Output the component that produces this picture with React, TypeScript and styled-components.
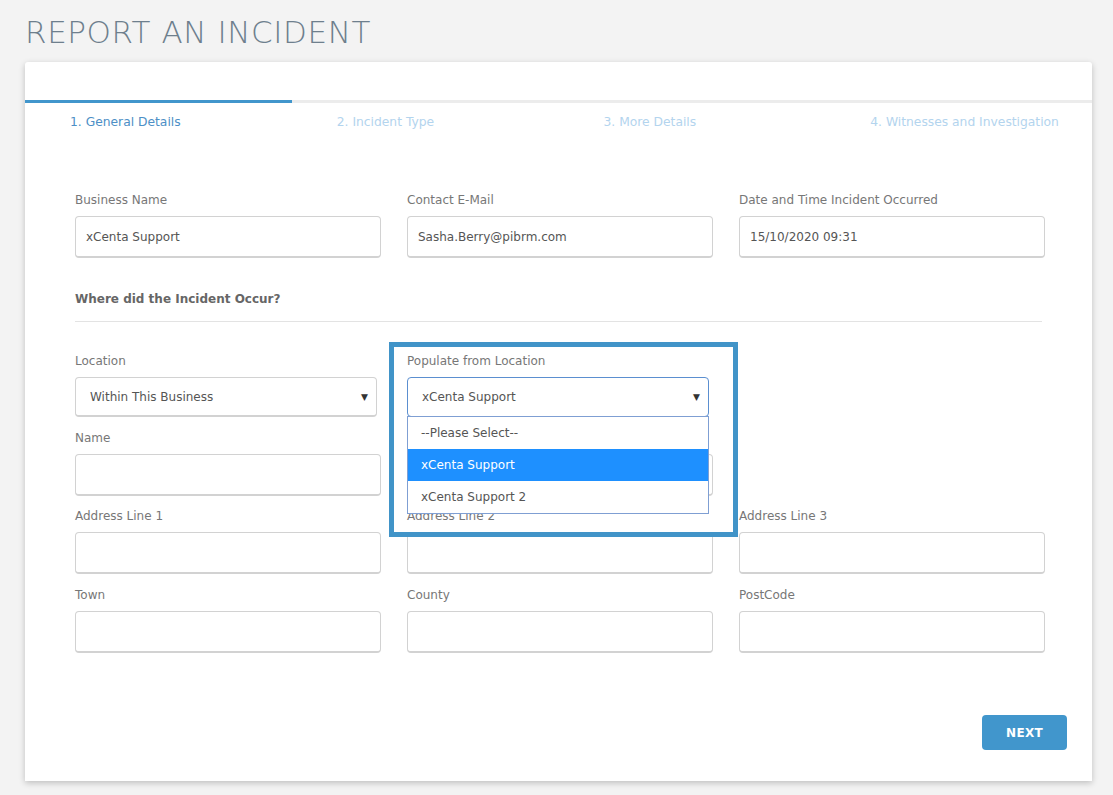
import React from "react";
import styled, { createGlobalStyle } from "styled-components";

const font = `"DejaVu Sans", "Open Sans", Arial, sans-serif`;

const GlobalStyle = createGlobalStyle`
  html, body {
    margin: 0;
    padding: 0;
    background: #f3f3f3;
    font-family: ${font};
  }
`;

const Page = styled.div`
  padding: 14px 21px 14px 25px;
`;

const Title = styled.h1`
  margin: 0 0 12px 0;
  font-size: 31px;
  font-weight: 300;
  letter-spacing: 0.6px;
  color: #6e7f8d;
  line-height: 36px;
`;

const Card = styled.div`
  background: #fff;
  border-radius: 3px 3px 0 0;
  box-shadow: 0 2px 6px rgba(0, 0, 0, 0.22);
  padding-top: 38px;
  padding-bottom: 31px;
`;

const Tabs = styled.div`
  display: flex;
`;

const Tab = styled.div<{ $active?: boolean }>`
  flex: 1;
  border-top: 3px solid ${(p) => (p.$active ? "#4196cc" : "#ececec")};
  padding: 11px 0 0 45px;
  font-size: 12.3px;
  line-height: 16px;
  color: ${(p) => (p.$active ? "#4d8fc6" : "#b3d4ee")};
  white-space: nowrap;
`;

const Body = styled.div`
  padding: 62px 47px 0 50px;
`;

const Row = styled.div<{ $gap?: number }>`
  display: grid;
  grid-template-columns: repeat(3, 306px);
  column-gap: 26px;
  margin-bottom: ${(p) => p.$gap ?? 13}px;
`;

const Field = styled.div`
  position: relative;
`;

const Label = styled.div`
  font-size: 12px;
  line-height: 16px;
  color: #777;
  margin-bottom: 8px;
  white-space: nowrap;
  min-height: 16px;
`;

const Input = styled.div`
  box-sizing: border-box;
  height: 42px;
  border: 1px solid #d2d2d2;
  border-bottom-width: 2px;
  border-radius: 4px;
  padding: 0 10px;
  display: flex;
  align-items: center;
  font-size: 12px;
  color: #555;
`;

const Select = styled.div<{ $focus?: boolean }>`
  box-sizing: border-box;
  width: 302px;
  height: 40px;
  border: 1px solid ${(p) => (p.$focus ? "#5b8fd0" : "#d2d2d2")};
  border-bottom-width: ${(p) => (p.$focus ? "1px" : "2px")};
  border-radius: 4px;
  padding: 0 8px 0 14px;
  display: flex;
  align-items: center;
  justify-content: space-between;
  font-size: 12px;
  color: #555;
`;

const Caret = styled.span`
  font-size: 9px;
  color: #333;
`;

const Section = styled.div`
  font-size: 12px;
  font-weight: bold;
  color: #666;
  line-height: 16px;
  margin-top: 33px;
  padding-bottom: 14px;
  border-bottom: 1px solid #e3e3e3;
  margin-bottom: 31px;
  margin-right: 3px;
`;

const Highlight = styled.div`
  position: absolute;
  left: -18px;
  top: -11px;
  width: 349px;
  height: 195px;
  box-sizing: border-box;
  border: 5px solid #4194c8;
  pointer-events: none;
  z-index: 3;
`;

const Options = styled.div`
  position: absolute;
  left: 0;
  top: 63px;
  width: 302px;
  box-sizing: border-box;
  border: 1px solid #7f9fd3;
  background: #fff;
  z-index: 2;
`;

const Option = styled.div<{ $selected?: boolean }>`
  height: 32px;
  display: flex;
  align-items: center;
  padding-left: 13px;
  font-size: 12px;
  color: ${(p) => (p.$selected ? "#fff" : "#555")};
  background: ${(p) => (p.$selected ? "#1e90ff" : "#fff")};
`;

const Footer = styled.div`
  display: flex;
  justify-content: flex-end;
  padding: 49px 25px 0 0;
`;

const Button = styled.button`
  width: 85px;
  height: 35px;
  border: none;
  border-radius: 4px;
  background: #4196cc;
  color: #fff;
  font-family: ${font};
  font-size: 12px;
  font-weight: bold;
  letter-spacing: 0.3px;
`;

const steps = ["1. General Details", "2. Incident Type", "3. More Details", "4. Witnesses and Investigation"];

const TextField = ({ label, value = "" }: { label: string; value?: string }) => (
  <Field>
    <Label>{label}</Label>
    <Input>{value}</Input>
  </Field>
);

export default function App() {
  return (
    <>
      <GlobalStyle />
      <Page>
        <Title>REPORT AN INCIDENT</Title>
        <Card>
          <Tabs>
            {steps.map((s, i) => (
              <Tab key={s} $active={i === 0}>
                {s}
              </Tab>
            ))}
          </Tabs>
          <Body>
            <Row>
              <TextField label="Business Name" value="xCenta Support" />
              <TextField label="Contact E-Mail" value="Sasha.Berry@pibrm.com" />
              <TextField label="Date and Time Incident Occurred" value="15/10/2020 09:31" />
            </Row>
            <Section>Where did the Incident Occur?</Section>
            <Row>
              <Field>
                <Label>Location</Label>
                <Select>
                  Within This Business
                  <Caret>▼</Caret>
                </Select>
              </Field>
              <Field>
                <Label>Populate from Location</Label>
                <Select $focus>
                  xCenta Support
                  <Caret>▼</Caret>
                </Select>
                <Options>
                  <Option>--Please Select--</Option>
                  <Option $selected>xCenta Support</Option>
                  <Option>xCenta Support 2</Option>
                </Options>
                <Highlight />
              </Field>
            </Row>
            <Row $gap={12}>
              <TextField label="Name" />
              <TextField label="" />
            </Row>
            <Row>
              <TextField label="Address Line 1" />
              <TextField label="Address Line 2" />
              <TextField label="Address Line 3" />
            </Row>
            <Row>
              <TextField label="Town" />
              <TextField label="County" />
              <TextField label="PostCode" />
            </Row>
          </Body>
          <Footer>
            <Button>NEXT</Button>
          </Footer>
        </Card>
      </Page>
    </>
  );
}
